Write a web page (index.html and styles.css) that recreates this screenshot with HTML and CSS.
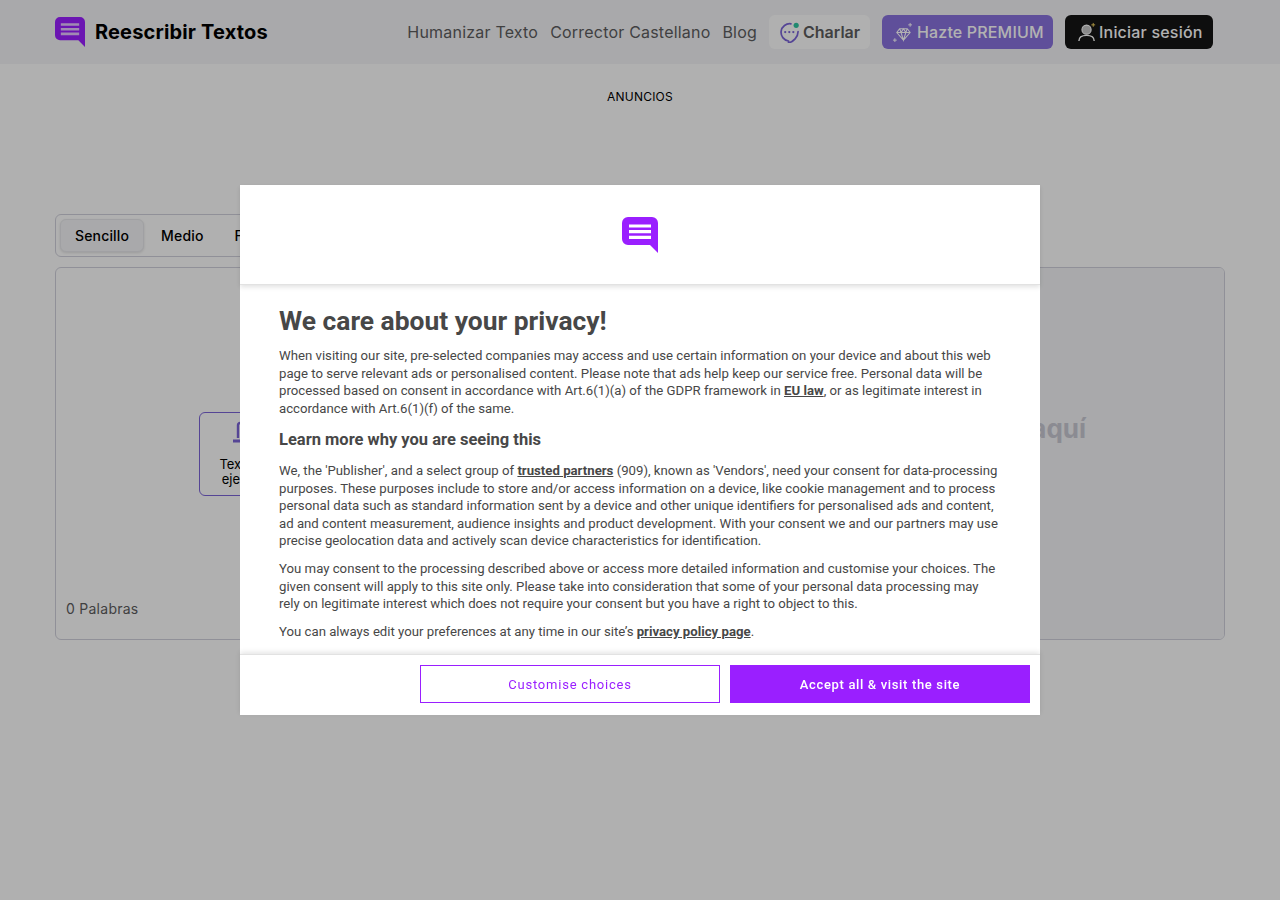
FILE: index.html
```html
<!DOCTYPE html>
<html lang="es">
<head>
<meta charset="utf-8">
<title>Reescribir Textos</title>
<link rel="stylesheet" href="styles.css">
</head>
<body>
<header class="topbar">
  <a class="brand">
    <svg class="brand-icon" viewBox="0 0 36 36"><path d="M6 0H30a6 6 0 0 1 6 6V36L28 28H6a6 6 0 0 1-6-6V6a6 6 0 0 1 6-6Z" fill="#9a1fff"/><path d="M7 9H29M7 14.700H29M7 20.300H29" stroke="#fff" stroke-opacity=".75" stroke-width="3.200"/></svg>
    <span>Reescribir Textos</span>
  </a>
  <nav class="nav">
    <a class="nav-link">Humanizar Texto</a>
    <a class="nav-link">Corrector Castellano</a>
    <a class="nav-link">Blog</a>
    <a class="btn btn-chat">
      <svg class="btn-icon" viewBox="0 0 22 22"><path d="M12.500 1.900A9 9 0 1 0 10 19.900V22C15 20.500 20 16 20 10" fill="none" stroke="#7a63d6" stroke-width="1.800" stroke-linecap="round" stroke-linejoin="round"/><circle cx="6.500" cy="10.500" r="1.200" fill="#7a63d6"/><circle cx="10.800" cy="10.500" r="1.200" fill="#7a63d6"/><circle cx="15" cy="10.500" r="1.200" fill="#7a63d6"/><circle cx="18" cy="3.500" r="2.700" fill="#2ec4a0"/></svg>
      Charlar
    </a>
    <a class="btn btn-premium">
      <svg class="btn-icon" viewBox="0 0 22 22"><path d="M8 7h8l3 4-7 8-7-8ZM5 11h14M9.500 11 12 19l2.500-8M8 7l1.500 4L12 7l2.500 4L16 7" fill="none" stroke="#fff" stroke-width="1.100"/><path d="M19 1v4M17 3h4M3 17v4M1 19h4" stroke="#fff" stroke-width="1"/></svg>
      Hazte PREMIUM
    </a>
    <a class="btn btn-login">
      <svg class="btn-icon" viewBox="0 0 22 22"><circle cx="10" cy="8" r="4.800" fill="#fff" fill-opacity=".75" stroke="#fff" stroke-width="1.200"/><path d="M2 20c0-4 3.500-6 8-6s8 2 8 6" fill="none" stroke="#fff" stroke-width="1.500"/><path d="M17 1v4M15 3h4" stroke="#f4d35e" stroke-width="1"/></svg>
      Iniciar sesión
    </a>
  </nav>
</header>

<main class="page">
  <p class="ads-label">ANUNCIOS</p>
  <div class="tabs">
    <button class="tab tab-active">Sencillo</button>
    <button class="tab">Medio</button>
    <button class="tab">Fuerte</button>
  </div>
  <section class="editor">
    <div class="pane pane-input">
      <div class="samples">
        <button class="sample">
          <svg class="sample-icon" viewBox="0 0 32 32"><path d="M8 18V5a2 2 0 0 1 2-2H22a2 2 0 0 1 2 2V18M13 8H19M13 13H19" fill="none" stroke="#7a63d6" stroke-width="2.400"/><path d="M3 21H29" stroke="#7a63d6" stroke-width="3.200"/></svg>
          <span>Texto de ejemplo</span>
        </button>
        <button class="sample">
          <svg class="sample-icon" viewBox="0 0 32 32"><path d="M8 18V5a2 2 0 0 1 2-2H22a2 2 0 0 1 2 2V18M13 8H19M13 13H19" fill="none" stroke="#7a63d6" stroke-width="2.400"/><path d="M3 21H29" stroke="#7a63d6" stroke-width="3.200"/></svg>
          <span>Pegar texto</span>
        </button>
      </div>
      <p class="word-count">0 Palabras</p>
    </div>
    <div class="pane pane-output">
      <p class="placeholder">Tu texto aparecerá aquí</p>
    </div>
  </section>
</main>

<div class="overlay">
  <div class="modal">
    <div class="modal-head">
      <svg class="modal-logo" viewBox="0 0 36 36"><path d="M6 0H30a6 6 0 0 1 6 6V36L28 28H6a6 6 0 0 1-6-6V6a6 6 0 0 1 6-6Z" fill="#9a1fff"/><path d="M7 9H29M7 14.700H29M7 20.300H29" stroke="#fff" stroke-width="3.200"/></svg>
    </div>
    <div class="modal-body">
      <h1>We care about your privacy!</h1>
      <p>When visiting our site, pre-selected companies may access and use certain information on your device and about this web page to serve relevant ads or personalised content. Please note that ads help keep our service free. Personal data will be processed based on consent in accordance with Art.6(1)(a) of the GDPR framework in <a>EU law</a>, or as legitimate interest in accordance with Art.6(1)(f) of the same.</p>
      <h2>Learn more why you are seeing this</h2>
      <p>We, the 'Publisher', and a select group of <a>trusted partners</a> (909), known as 'Vendors', need your consent for data-processing purposes. These purposes include to store and/or access information on a device, like cookie management and to process personal data such as standard information sent by a device and other unique identifiers for personalised ads and content, ad and content measurement, audience insights and product development. With your consent we and our partners may use precise geolocation data and actively scan device characteristics for identification.</p>
      <p>You may consent to the processing described above or access more detailed information and customise your choices. The given consent will apply to this site only. Please take into consideration that some of your personal data processing may rely on legitimate interest which does not require your consent but you have a right to object to this.</p>
      <p>You can always edit your preferences at any time in our site’s <a>privacy policy page</a>.</p>
    </div>
    <div class="modal-foot">
      <button class="cta cta-outline">Customise choices</button>
      <button class="cta cta-solid">Accept all &amp; visit the site</button>
    </div>
  </div>
</div>
</body>
</html>
```
FILE: styles.css
```css
* { box-sizing: border-box; }
html, body { margin: 0; height: 100%; }
body {
  background: #fdfdfd;
  font-family: Inter, "Liberation Sans", sans-serif;
  color: #000;
  overflow: hidden;
}
p { margin: 0; }
button { font-family: inherit; cursor: pointer; }

.topbar {
  height: 64px;
  background: #f2f3f5;
  display: flex;
  align-items: center;
  justify-content: space-between;
  padding: 0 67px 0 55px;
}
.brand {
  display: flex;
  align-items: center;
  gap: 10px;
  font-size: 20px;
  font-weight: 700;
  letter-spacing: .16px;
}
.brand-icon { width: 30px; height: 30px; }
.nav { display: flex; align-items: center; gap: 12px; font-size: 16px; }
.nav-link { color: #5c5c5e; letter-spacing: .2px; }
.btn {
  height: 34px;
  display: flex;
  align-items: center;
  gap: 3px;
  border-radius: 6px;
  font-weight: 500;
  white-space: nowrap;
}
.btn-icon { width: 21px; height: 21px; flex: none; }
.btn-chat { background: #fdfdfd; color: #5c5c5e; padding: 0 10px; font-weight: 600; width: 101px; }
.btn-premium { background: #8871dd; color: #fff; padding: 0 10px; width: 171px; gap: 4px; letter-spacing: .16px; }
.btn-login { background: #151515; color: #fff; padding: 0 12px; width: 148px; gap: 1px; letter-spacing: .2px; }

.page { padding: 0 55px; }
.ads-label {
  font-size: 12px;
  line-height: 16px;
  text-align: center;
  letter-spacing: .2px;
  padding: 25px 0 109px;
  height: 150px;
}
.tabs {
  width: 400px;
  height: 43px;
  display: flex;
  align-items: center;
  gap: 3px;
  padding: 0 4px;
  border: 1px solid #cfcfda;
  border-radius: 6px;
}
.tab {
  height: 33px;
  padding: 0 14px;
  border: 0;
  border-radius: 6px;
  background: transparent;
  color: #000;
  font-size: 14px;
  font-weight: 500;
  letter-spacing: .16px;
}
.tab-active { background: #f2f3f5; border: 1px solid #e6e6ea; box-shadow: 0 1px 3px rgba(0,0,0,.12); }
.editor {
  margin-top: 10px;
  height: 373px;
  display: flex;
  border: 1px solid #cfcfda;
  border-radius: 6px;
  overflow: hidden;
}
.pane { flex: 1; display: flex; flex-direction: column; }
.pane-input { padding: 144px 10px 22px; justify-content: space-between; }
.pane-output { background: #f2f3f5; align-items: center; justify-content: center; }
.samples { display: flex; gap: 12px; padding-left: 133px; }
.sample {
  width: 94px;
  height: 84px;
  padding: 7px 8px 0;
  background: transparent;
  border: 1px solid #7a63d6;
  border-radius: 6px;
  color: #000;
  font-size: 13px;
  font-weight: 400;
  line-height: 15px;
  display: flex;
  flex-direction: column;
  align-items: center;
}
.sample-icon { width: 32px; height: 32px; margin-bottom: 5px; flex: none; }
.word-count { font-size: 14px; color: #5c5c5e; letter-spacing: .26px; }
.placeholder { font-size: 26px; font-weight: 700; color: #c8c8d2; padding-bottom: 50px; white-space: nowrap; }

.overlay {
  position: fixed;
  inset: 0;
  background: rgba(0,0,0,.3);
  display: flex;
  align-items: center;
  justify-content: center;
}
.modal {
  width: 800px;
  height: 530px;
  background: #fff;
  display: flex;
  flex-direction: column;
  font-family: Roboto, "Liberation Sans", sans-serif;
  color: #474747;
}
.modal-head {
  height: 100px;
  flex: none;
  display: flex;
  align-items: center;
  justify-content: center;
  border-bottom: 1px solid #e2e2e2;
  box-shadow: 0 2px 5px rgba(0,0,0,.12);
  position: relative;
}
.modal-logo { width: 36px; height: 36px; }
.modal-body {
  flex: 1;
  overflow: hidden;
  padding: 20px 39px 0;
}
.modal-body h1 {
  margin: 0 0 10px;
  font-size: 26.400px;
  line-height: 32px;
  font-weight: 700;
}
.modal-body h2 {
  margin: 12.400px 0 12.300px;
  font-size: 16.500px;
  line-height: 20px;
  font-weight: 700;
}
.modal-body p {
  font-size: 13.200px;
  line-height: 17.600px;
  margin-bottom: 10px;
}
.modal-body a { font-weight: 700; text-decoration: underline; }
.modal-foot {
  height: 61px;
  flex: none;
  display: flex;
  justify-content: flex-end;
  align-items: flex-start;
  gap: 10px;
  padding: 10px 10px 0;
  border-top: 1px solid #e2e2e2;
  box-shadow: 0 -2px 5px rgba(0,0,0,.1);
  position: relative;
}
.cta {
  width: 300px;
  height: 38px;
  font-family: Roboto, "Liberation Sans", sans-serif;
  font-size: 13px;
}
.cta-outline { background: #fff; border: 1px solid #9a1fff; color: #9a1fff; font-weight: 400; letter-spacing: .78px; }
.cta-solid { background: #9a1fff; border: 1px solid #9a1fff; color: #fff; font-weight: 500; letter-spacing: .65px; }
```
